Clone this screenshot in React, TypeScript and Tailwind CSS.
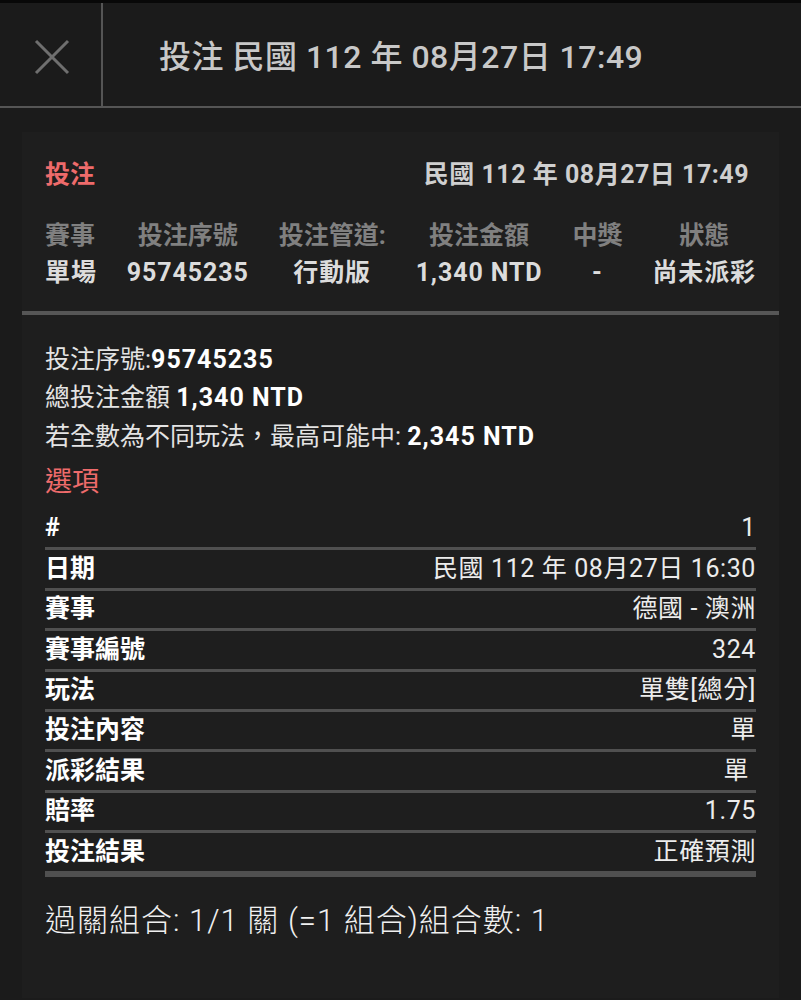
import React from "react";

const font = { fontFamily: "Roboto, 'Noto Sans CJK TC', sans-serif" };

const summary = [
  { label: "賽事", value: "單場" },
  { label: "投注序號", value: "95745235" },
  { label: "投注管道:", value: "行動版" },
  { label: "投注金額", value: "1,340 NTD" },
  { label: "中獎", value: "-" },
  { label: "狀態", value: "尚未派彩" },
];

const rows = [
  { label: "#", value: "1" },
  { label: "日期", value: "民國 112 年 08月27日 16:30" },
  { label: "賽事", value: "德國 - 澳洲" },
  { label: "賽事編號", value: "324" },
  { label: "玩法", value: "單雙[總分]" },
  { label: "投注內容", value: "單" },
  { label: "派彩結果", value: "單", pad: true },
  { label: "賠率", value: "1.75" },
  { label: "投注結果", value: "正確預測" },
];

const App: React.FC = () => {
  return (
    <div
      className="min-h-[1000px] w-[801px] bg-[#1b1b1b] border-t-[3px] border-[#080808]"
      style={font}
    >
      {/* Header */}
      <header className="flex h-[105px] border-b-2 border-[#555]">
        <div className="w-[103px] flex items-center justify-center border-r-2 border-[#555]">
          <svg width="36" height="36" viewBox="0 0 36 36" className="ml-[2px] mt-[4px]">
            <path d="M2 2 L34 34 M34 2 L2 34" stroke="#6f6f6f" strokeWidth="3" fill="none" />
          </svg>
        </div>
        <h1 className="flex items-center pl-[56px] pt-[5px] text-[32px] font-medium text-[#c8c8c8] tracking-[0.5px]">
          投注 民國 112 年 08月27日 17:49
        </h1>
      </header>

      {/* Card */}
      <section className="mx-[22px] mt-[24px] bg-[#1e1e1e] min-h-[866px]">
        <div className="px-[23px] pt-[24px]">
          <div className="flex justify-between items-center font-bold text-[25px]">
            <span className="text-[#ee6b6b]">投注</span>
            <span className="text-[#cfcfcf] mr-[7px] tracking-[0.5px]">民國 112 年 08月27日 17:49</span>
          </div>

          <div className="flex justify-between mt-[25px] pb-[22px] text-[25px] font-bold">
            {summary.map((c, i) => (
              <div
                key={c.label}
                className={`flex flex-col gap-[4px] ${i === 0 ? "items-start" : "items-center"}`}
              >
                <span className="text-[#808080] leading-[33px]">{c.label}</span>
                <span className="text-[#dcdcdc] leading-[33px] tracking-[0.9px]">{c.value}</span>
              </div>
            ))}
          </div>
        </div>

        <div className="h-[4px] bg-[#565656]" />

        <div className="px-[23px] pt-[26px] text-[25px] text-[#e4e4e4] leading-[38.5px]">
          <p>
            投注序號:<span className="font-bold text-white tracking-[1px]">95745235</span>
          </p>
          <p>
            總投注金額 <span className="font-bold text-white tracking-[1px]">1,340 NTD</span>
          </p>
          <p>
            若全數為不同玩法，最高可能中: <span className="font-bold text-white tracking-[1px]">2,345 NTD</span>
          </p>
          <p className="text-[#ee6b6b] text-[27px] mt-[6px] leading-[40px]">選項</p>

          <div className="mt-[8px]">
            {rows.map((r) => (
              <div
                key={r.label}
                className="flex justify-between items-center h-[40.4px] border-b-[3px] border-[#505050] last:border-b-[6px] last:h-[43.4px]"
              >
                <span className="font-bold text-white">{r.label}</span>
                <span className={`text-[#ececec] tracking-[0.6px] ${r.pad ? "pr-[7px]" : ""}`}>{r.value}</span>
              </div>
            ))}
          </div>

          <p className="mt-[25px] text-[31px] text-[#f0f0f0] font-light tracking-[1px]">
            過關組合: 1/1 關 (=1 組合)組合數: 1
          </p>
        </div>
      </section>
    </div>
  );
};

export default App;
